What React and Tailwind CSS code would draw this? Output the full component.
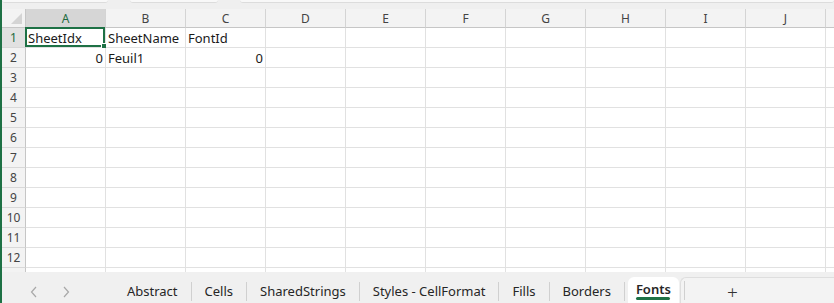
import React from 'react';

const cols = ['A', 'B', 'C', 'D', 'E', 'F', 'G', 'H', 'I', 'J', 'K'];
const rows = [1, 2, 3, 4, 5, 6, 7, 8, 9, 10, 11, 12, 13];
const data = {
  '1-A': { v: 'SheetIdx' },
  '1-B': { v: 'SheetName' },
  '1-C': { v: 'FontId' },
  '2-A': { v: '0', right: true },
  '2-B': { v: 'Feuil1' },
  '2-C': { v: '0', right: true },
};
const tabs = ['Abstract', 'Cells', 'SharedStrings', 'Styles - CellFormat', 'Fills', 'Borders'];

function Cell({ row, col }) {
  const d = data[`${row}-${col}`];
  const selected = row === 1 && col === 'A';
  return (
    <div className="relative h-[20px] w-[80px] shrink-0 border-r border-b border-[#e1e1e1] bg-white">
      {d && (
        <div className={`flex h-full items-center px-[2px] pt-[2px] text-[13px] leading-none text-[#1a1a1a] ${d.right ? 'justify-end' : ''}`}>
          {d.v}
        </div>
      )}
      {selected && (
        <div className="absolute -top-[1px] -left-[1px] right-0 bottom-0 border-2 border-[#1e7145]">
          <div className="absolute -right-[4px] -bottom-[4px] h-[6px] w-[6px] border border-white bg-[#1e7145]" />
        </div>
      )}
    </div>
  );
}

export default function App() {
  return (
    <div className="flex h-[303px] w-[834px] flex-col overflow-hidden border-l-2 border-[#1e7145] bg-[#f0f0f0] font-['Noto_Sans',sans-serif]">
      {/* formula bar bottoms */}
      <div className="flex h-[9px] shrink-0 gap-[22px] bg-[#efefef]">
        <div className="h-[3px] w-[106px] rounded-b-[4px] border-b border-[#dcdcdc] bg-[#f8f8f8]" />
        <div className="h-[3px] w-[88px] rounded-b-[4px] border-b border-[#dcdcdc] bg-[#f8f8f8]" />
        <div className="h-[3px] flex-1 rounded-b-[4px] border-b border-[#dcdcdc] bg-[#f8f8f8]" />
      </div>

      <div className="flex-1 overflow-hidden">
        <div className="flex h-[19px]">
          <div className="relative w-[24px] shrink-0 border-r border-b border-[#c6c6c6] bg-[#f3f3f3]">
            <div className="absolute right-[3px] bottom-[3px] h-0 w-0 border-b-[11px] border-l-[11px] border-b-[#d4d4d4] border-l-transparent" />
          </div>
          {cols.map((c) => (
            <div
              key={c}
              className={`flex w-[80px] shrink-0 items-center justify-center border-r border-b border-[#d4d4d4] pt-[1px] text-[12px] ${c === 'A' ? 'border-b-[#bdbdbd] bg-[#d6d6d6] text-[#1e6b40]' : 'border-b-[#c6c6c6] bg-[#f3f3f3] text-[#444]'}`}
            >
              {c}
            </div>
          ))}
        </div>
        {rows.map((r) => (
          <div key={r} className="flex shrink-0">
            <div className={`flex h-[20px] w-[24px] shrink-0 items-center justify-center border-r border-b border-[#d8d8d8] pt-[1px] text-[12px] ${r === 1 ? 'border-r-[#bdbdbd] bg-[#e1e1e1] text-[#1e6b40]' : 'border-r-[#c6c6c6] bg-[#f3f3f3] text-[#444]'}`}>
              {r}
            </div>
            {cols.map((c) => (
              <Cell key={c} row={r} col={c} />
            ))}
          </div>
        ))}
      </div>

      {/* sheet tabs */}
      <div className="flex h-[31px] shrink-0 items-end bg-[#f0f0f0] text-[13px] text-[#262626]">
        <div className="flex h-full w-[112px] shrink-0 items-center gap-[22px] pt-[8px] pl-[27px] text-[#a8a8a8]">
          <svg width="10" height="14" viewBox="0 0 10 14" fill="none" stroke="currentColor" strokeWidth="1.2">
            <path d="M7 2 L2.5 7 L7 12" />
          </svg>
          <svg width="10" height="14" viewBox="0 0 10 14" fill="none" stroke="currentColor" strokeWidth="1.2">
            <path d="M3 2 L7.5 7 L3 12" />
          </svg>
        </div>
        <div className="flex h-full items-center pt-[8px]">
          {tabs.map((t) => (
            <div key={t} className="flex h-full items-center">
              <div className="px-[13px] pt-[1px]">{t}</div>
              <div className="h-[19px] w-px bg-[#d0d0d0]" />
            </div>
          ))}
        </div>
        <div className="ml-[3px] flex h-[26px] flex-col items-center justify-between rounded-t-[6px] bg-white px-[8px] pt-[4px]">
          <span className="font-semibold leading-[16px]">Fonts</span>
          <div className="mb-[3px] h-[3px] w-[34px] rounded-full bg-[#1e7145]" />
        </div>
        <div className="ml-[1px] flex h-[26px] flex-1 items-center rounded-tl-[6px] border-t border-l border-[#dedede] bg-[#f3f3f3]">
          <div className="ml-[3px] h-[19px] w-px bg-[#d0d0d0]" />
          <span className="ml-[42px] pt-[2px] text-[19px] font-light leading-[20px] text-[#333]">+</span>
        </div>
      </div>
    </div>
  );
}
